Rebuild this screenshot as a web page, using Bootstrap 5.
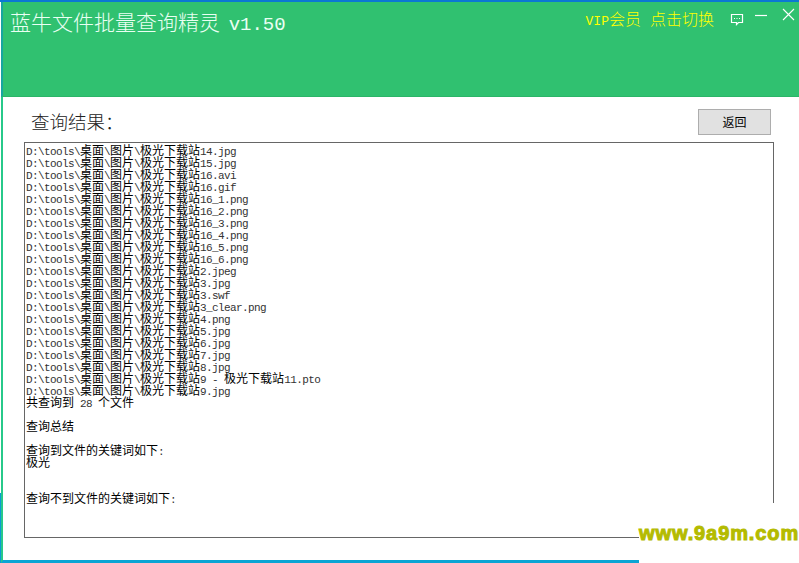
<!DOCTYPE html>
<html lang="zh-CN">
<head>
<meta charset="utf-8">
<title>蓝牛文件批量查询精灵</title>
<link href="https://cdn.jsdelivr.net/npm/bootstrap@5.3.0/dist/css/bootstrap.min.css" rel="stylesheet">
<style>
html, body { width: 799px; height: 563px; overflow: hidden; background: #fff; }
body { position: relative; font-family: "Liberation Serif", "Noto Sans CJK SC", serif; }
.app-frame { width: 799px; height: 563px; border-top: 2px solid #0b78d4; padding-left: 1px; display: flex; flex-direction: column; background: linear-gradient(to bottom, #fff 491px, #0b9ad4 491px) no-repeat left top / 1px 100%; }
.app-head { height: 95px; background: #30c170; border-bottom: 1px solid #2bb568; border-left: 2px solid #18a5a0; padding: 5px 0 0 7px; flex: none; }
.app-title { color: #eafff3; font-size: 21px; line-height: 28px; font-family: "Noto Sans CJK SC", sans-serif; font-weight: 300; white-space: nowrap; }
.app-title .lat { font-family: "Liberation Mono", monospace; font-size: 19px; margin-left: 4px; }
.vip { color: #ffff00; font-family: "Noto Sans CJK SC", sans-serif; font-size: 16px; line-height: 22px; margin-right: 16px; font-weight: 300; white-space: nowrap; }
.vip .lat { font-family: "Liberation Mono", monospace; font-size: 13px; }
.vip .gap9 { margin-left: 9px; }
.win-btns { gap: 11px; margin-top: 1px; }
.wbtn-x { margin: 0 4px 0 3px; }
.body-wrap { flex: 1; border-left: 2px solid #27c98a; border-bottom: 3px solid #0ba5d4; padding: 0 0 0 21px; display: flex; flex-direction: column; min-height: 0; }
.result-top { height: 45px; flex: none; }
.result-label { font-family: "Noto Sans CJK SC", sans-serif; font-size: 18.5px; line-height: 24px; padding: 12px 0 0 7px; color: #222; font-weight: 300; }
.back-btn { width: 73px; height: 26px; margin: 12px 28px 0 0; padding: 0; border: 1px solid #adadad; border-radius: 0; background: #e1e1e1; color: #000; font-family: "Noto Sans CJK SC", sans-serif; font-size: 12px; line-height: 24px; }
.back-btn:hover { background: #e1e1e1; color: #000; border-color: #adadad; }
.result-box { width: 750px; height: 396px; border: 1px solid #666; padding: 1px 0 0 1px; overflow: hidden; }
.res-line { height: 12px; line-height: 12px; white-space: pre; font-family: "Liberation Mono", monospace; font-size: 11px; letter-spacing: -.6px; color: #333; }
.res-line b { font-family: "Noto Sans CJK SC", sans-serif; font-size: 12px; font-weight: 400; letter-spacing: 0; color: #000; }
.wm-patch { position: absolute; left: 639px; top: 503px; width: 160px; height: 60px; background: #fff; padding-top: 19px; }
.wm-text { font-family: "Liberation Sans", sans-serif; font-weight: 700; font-size: 20px; line-height: 22px; color: #b4bb00; -webkit-text-stroke: 1px #b4bb00; letter-spacing: .9px; white-space: nowrap; }
</style>
</head>
<body>
<div class="app-frame">
  <header class="app-head d-flex justify-content-between align-items-start">
    <div class="app-title">蓝牛文件批量查询精灵 <span class="lat">v1.50</span></div>
    <div class="d-flex align-items-start">
      <div class="vip"><span class="lat">VIP</span>会员<span class="gap9">点击切换</span></div>
      <div class="d-flex win-btns">
        <svg width="14" height="14" viewBox="0 0 14 14" class="mt-1" aria-hidden="true"><path d="M1.500 2.500h11v8H8.500L6.500 12.500v-2h-5z" fill="none" stroke="#fff" stroke-width="1.200"/><path d="M4 6.500h1M6.500 6.500h1M9 6.500h1" stroke="#fff"/></svg>
        <svg width="13" height="14" viewBox="0 0 13 14" aria-hidden="true"><path d="M0 7.500h12" stroke="#fff" stroke-width="1.200"/></svg>
        <svg width="13" height="13" viewBox="0 0 13 13" class="wbtn-x" aria-hidden="true"><path d="M1 1l11 11M12 1L1 12" stroke="#fff" stroke-width="1.100"/></svg>
      </div>
    </div>
  </header>
  <main class="body-wrap">
    <div class="result-top d-flex justify-content-between align-items-start">
      <div class="result-label">查询结果：</div>
      <button type="button" class="btn back-btn">返回</button>
    </div>
    <div class="result-box">
      <div class="res-line">D:\tools\<b>桌面</b>\<b>图片</b>\<b>极光下载站</b>14.jpg</div>
      <div class="res-line">D:\tools\<b>桌面</b>\<b>图片</b>\<b>极光下载站</b>15.jpg</div>
      <div class="res-line">D:\tools\<b>桌面</b>\<b>图片</b>\<b>极光下载站</b>16.avi</div>
      <div class="res-line">D:\tools\<b>桌面</b>\<b>图片</b>\<b>极光下载站</b>16.gif</div>
      <div class="res-line">D:\tools\<b>桌面</b>\<b>图片</b>\<b>极光下载站</b>16_1.png</div>
      <div class="res-line">D:\tools\<b>桌面</b>\<b>图片</b>\<b>极光下载站</b>16_2.png</div>
      <div class="res-line">D:\tools\<b>桌面</b>\<b>图片</b>\<b>极光下载站</b>16_3.png</div>
      <div class="res-line">D:\tools\<b>桌面</b>\<b>图片</b>\<b>极光下载站</b>16_4.png</div>
      <div class="res-line">D:\tools\<b>桌面</b>\<b>图片</b>\<b>极光下载站</b>16_5.png</div>
      <div class="res-line">D:\tools\<b>桌面</b>\<b>图片</b>\<b>极光下载站</b>16_6.png</div>
      <div class="res-line">D:\tools\<b>桌面</b>\<b>图片</b>\<b>极光下载站</b>2.jpeg</div>
      <div class="res-line">D:\tools\<b>桌面</b>\<b>图片</b>\<b>极光下载站</b>3.jpg</div>
      <div class="res-line">D:\tools\<b>桌面</b>\<b>图片</b>\<b>极光下载站</b>3.swf</div>
      <div class="res-line">D:\tools\<b>桌面</b>\<b>图片</b>\<b>极光下载站</b>3_clear.png</div>
      <div class="res-line">D:\tools\<b>桌面</b>\<b>图片</b>\<b>极光下载站</b>4.png</div>
      <div class="res-line">D:\tools\<b>桌面</b>\<b>图片</b>\<b>极光下载站</b>5.jpg</div>
      <div class="res-line">D:\tools\<b>桌面</b>\<b>图片</b>\<b>极光下载站</b>6.jpg</div>
      <div class="res-line">D:\tools\<b>桌面</b>\<b>图片</b>\<b>极光下载站</b>7.jpg</div>
      <div class="res-line">D:\tools\<b>桌面</b>\<b>图片</b>\<b>极光下载站</b>8.jpg</div>
      <div class="res-line">D:\tools\<b>桌面</b>\<b>图片</b>\<b>极光下载站</b>9 - <b>极光下载站</b>11.pto</div>
      <div class="res-line">D:\tools\<b>桌面</b>\<b>图片</b>\<b>极光下载站</b>9.jpg</div>
      <div class="res-line"><b>共查询到</b> 28 <b>个文件</b></div>
      <div class="res-line"> </div>
      <div class="res-line"><b>查询总结</b></div>
      <div class="res-line"> </div>
      <div class="res-line"><b>查询到文件的关键词如下</b>:</div>
      <div class="res-line"><b>极光</b></div>
      <div class="res-line"> </div>
      <div class="res-line"> </div>
      <div class="res-line"><b>查询不到文件的关键词如下</b>:</div>
    </div>
  </main>
</div>
<div class="wm-patch"><div class="wm-text">www.9a9m.com</div></div>
</body>
</html>
